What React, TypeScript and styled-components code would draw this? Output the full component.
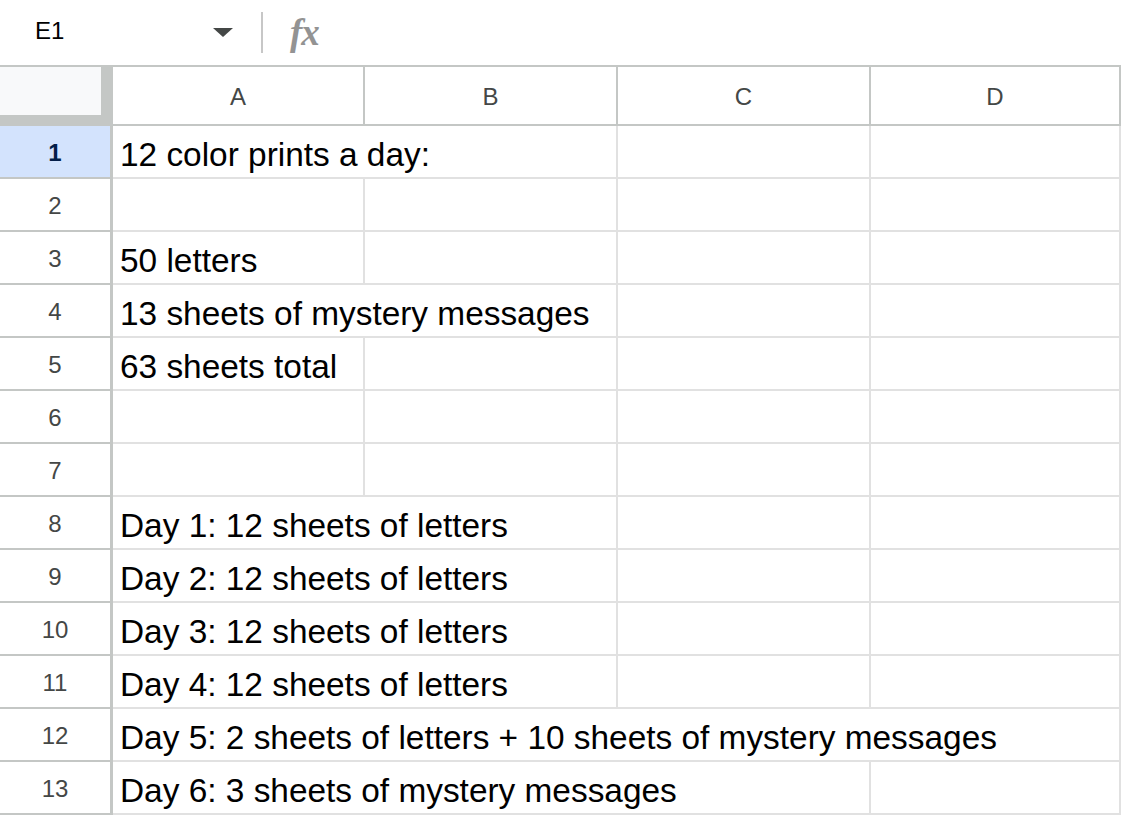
import React from 'react';
import styled, {createGlobalStyle} from 'styled-components';

type CellData = { text?: string; span?: number };

const columns = ['A', 'B', 'C', 'D'];

const rows: CellData[][] = [
  [{text: '12 color prints a day:', span: 2}, {}, {}],
  [{}, {}, {}, {}],
  [{text: '50 letters'}, {}, {}, {}],
  [{text: '13 sheets of mystery messages', span: 2}, {}, {}],
  [{text: '63 sheets total'}, {}, {}, {}],
  [{}, {}, {}, {}],
  [{}, {}, {}, {}],
  [{text: 'Day 1: 12 sheets of letters', span: 2}, {}, {}],
  [{text: 'Day 2: 12 sheets of letters', span: 2}, {}, {}],
  [{text: 'Day 3: 12 sheets of letters', span: 2}, {}, {}],
  [{text: 'Day 4: 12 sheets of letters', span: 2}, {}, {}],
  [{text: 'Day 5: 2 sheets of letters + 10 sheets of mystery messages', span: 4}],
  [{text: 'Day 6: 3 sheets of mystery messages', span: 3}, {}],
];

const App = () => {
  return (
    <>
      <GlobalStyle/>
      <Page>
        <FormulaBar>
          <NameBox>
            <span>E1</span>
            <DropArrow/>
          </NameBox>
          <Divider/>
          <FxIcon>fx</FxIcon>
        </FormulaBar>
        <Grid>
          <Corner/>
          {columns.map(c => <ColHeader key={c}>{c}</ColHeader>)}
          {rows.map((row, i) => (
            <React.Fragment key={i}>
              <RowHeader $active={i === 0}>{i + 1}</RowHeader>
              {row.map((cell, j) => (
                <Cell key={j} $span={cell.span || 1}>{cell.text}</Cell>
              ))}
            </React.Fragment>
          ))}
        </Grid>
      </Page>
    </>
  );
};

const GlobalStyle = createGlobalStyle`
  html, body {
    margin: 0;
    padding: 0;
    background: #fff;
    overflow: hidden;
    font-family: "Liberation Sans", Arial, sans-serif;
  }
`;
const Page = styled.div`
  width: 1121px;
  height: 815px;
  overflow: hidden;
  background: #fff;
`;
const FormulaBar = styled.div`
  display: flex;
  align-items: center;
  height: 65px;
  border-bottom: 2px solid #c4c7c5;
`;
const NameBox = styled.div`
  display: flex;
  align-items: center;
  justify-content: space-between;
  box-sizing: border-box;
  width: 245px;
  padding: 0 12px 3px 35px;
  font-size: 24px;
  color: #000;
`;
const DropArrow = styled.div`
  width: 0;
  height: 0;
  margin-top: 3px;
  border-left: 10px solid transparent;
  border-right: 10px solid transparent;
  border-top: 9px solid #444746;
`;
const Divider = styled.div`
  width: 2px;
  height: 41px;
  margin-left: 16px;
  background: #c7c7c7;
`;
const FxIcon = styled.span`
  margin-left: 27px;
  font-family: "Liberation Serif", "DejaVu Serif", serif;
  font-style: italic;
  font-weight: 700;
  font-size: 37px;
  line-height: 1;
  color: #939393;
  letter-spacing: -1px;
`;
const Grid = styled.div`
  display: grid;
  grid-template-columns: 113px 252px 253px 253px 250px;
  grid-template-rows: 59px;
  grid-auto-rows: 53px;
`;
const Corner = styled.div`
  box-sizing: border-box;
  background: #f8f9fa;
  border-right: 12px solid #c4c7c5;
  border-bottom: 11px solid #c4c7c5;
`;
const ColHeader = styled.div`
  display: flex;
  align-items: center;
  justify-content: center;
  box-sizing: border-box;
  padding-top: 2px;
  border-right: 2px solid #c4c7c5;
  border-bottom: 2px solid #c4c7c5;
  font-size: 24px;
  color: #444746;
`;
const RowHeader = styled.div<{ $active?: boolean }>`
  display: flex;
  align-items: center;
  justify-content: center;
  box-sizing: border-box;
  padding-top: 3px;
  border-right: 3px solid #c4c7c5;
  border-bottom: 2px solid #c4c7c5;
  font-size: 24px;
  background: ${p => p.$active ? '#d3e3fd' : '#fff'};
  color: ${p => p.$active ? '#041e49' : '#444746'};
  font-weight: ${p => p.$active ? 700 : 400};
`;
const Cell = styled.div<{ $span: number }>`
  grid-column: span ${p => p.$span};
  display: flex;
  align-items: flex-end;
  box-sizing: border-box;
  padding: 0 7px 3px;
  border-right: 2px solid #e1e1e1;
  border-bottom: 2px solid #e1e1e1;
  font-size: 33.4px;
  color: #000;
  white-space: nowrap;
`;

export default App;
